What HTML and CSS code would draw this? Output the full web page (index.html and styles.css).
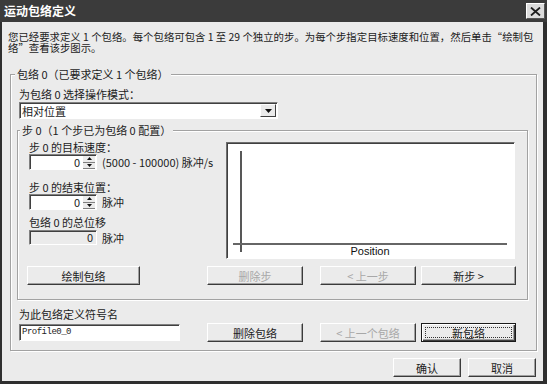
FILE: index.html
```html
<!DOCTYPE html>
<html lang="zh-CN">
<head>
    <meta charset="UTF-8">
    <meta name="viewport" content="width=device-width, initial-scale=1.0">
    <title>运动包络定义</title>
    <link rel="stylesheet" href="styles.css">
</head>
<body>
    <div class="window">
        <div class="titlebar">
            <span class="title">运动包络定义</span>
            <span class="close-btn">
                <svg width="11" height="9" viewBox="0 0 11 9"><path d="M1 0.5 L10 8.5 M10 0.5 L1 8.5" stroke="#1e1e1e" stroke-width="1.8"/></svg>
            </span>
        </div>

        <div class="client">
            <p class="intro">您已经要求定义 1 个包络。每个包络可包含 1 至 29 个独立的步。为每个步指定目标速度和位置，然后单击“绘制包<br>络”查看该步图示。</p>

            <fieldset class="group outer">
                <legend>包络 0（已要求定义 1 个包络）</legend>
                <div class="outer-body">
                    <div class="label mode-label">为包络 0 选择操作模式：</div>
                    <div class="select">
                        <span class="select-text">相对位置</span>
                        <span class="select-btn">
                            <svg width="7" height="4" viewBox="0 0 7 4"><polygon points="0,0 7,0 3.5,4" fill="#111"/></svg>
                        </span>
                    </div>

                    <fieldset class="group inner">
                        <legend>步 0（1 个步已为包络 0 配置）</legend>
                        <div class="inner-body">
                            <div class="step-main">
                                <div class="fields">
                                    <div class="label">步 0 的目标速度：</div>
                                    <div class="field-row">
                                        <div class="spin">
                                            <span class="spin-value">0</span>
                                            <span class="spin-btns">
                                                <span class="spin-half"><svg width="5" height="3" viewBox="0 0 5 3"><polygon points="2.5,0 5,3 0,3" fill="#111"/></svg></span>
                                                <span class="spin-half"><svg width="5" height="3" viewBox="0 0 5 3"><polygon points="0,0 5,0 2.5,3" fill="#111"/></svg></span>
                                            </span>
                                        </div>
                                        <span class="unit">(5000 - 100000) 脉冲/s</span>
                                    </div>

                                    <div class="label gap-label">步 0 的结束位置：</div>
                                    <div class="field-row">
                                        <div class="spin">
                                            <span class="spin-value">0</span>
                                            <span class="spin-btns">
                                                <span class="spin-half"><svg width="5" height="3" viewBox="0 0 5 3"><polygon points="2.5,0 5,3 0,3" fill="#111"/></svg></span>
                                                <span class="spin-half"><svg width="5" height="3" viewBox="0 0 5 3"><polygon points="0,0 5,0 2.5,3" fill="#111"/></svg></span>
                                            </span>
                                        </div>
                                        <span class="unit">脉冲</span>
                                    </div>

                                    <div class="label total-label">包络 0 的总位移</div>
                                    <div class="field-row total-row">
                                        <div class="readonly">0</div>
                                        <span class="unit">脉冲</span>
                                    </div>
                                </div>

                                <div class="chart">
                                    <svg width="287" height="115" viewBox="0 0 287 115">
                                        <line x1="14" y1="8" x2="14" y2="109" stroke="#111" stroke-width="1.4"/>
                                        <line x1="6" y1="101" x2="280" y2="101" stroke="#666" stroke-width="2"/>
                                        <text x="143" y="112" text-anchor="middle" class="axis-text">Position</text>
                                    </svg>
                                </div>
                            </div>

                            <div class="btn-row step-buttons">
                                <button class="btn wide">绘制包络</button>
                                <button class="btn col2" disabled>删除步</button>
                                <button class="btn col3" disabled>&lt; 上一步</button>
                                <button class="btn col4">新步 &gt;</button>
                            </div>
                        </div>
                    </fieldset>

                    <div class="label name-label">为此包络定义符号名</div>
                    <div class="btn-row name-row">
                        <div class="textbox">Profile0_0</div>
                        <button class="btn col2 after-input">删除包络</button>
                        <button class="btn col3" disabled>&lt; 上一个包络</button>
                        <button class="btn col4 default">新包络</button>
                    </div>
                </div>
            </fieldset>

            <div class="actions">
                <button class="btn dlg">确认</button>
                <button class="btn dlg">取消</button>
            </div>
        </div>
    </div>
</body>
</html>
```

FILE: styles.css
```css
* {
    box-sizing: border-box;
}

body {
    margin: 0;
    background-color: #ebebeb;
    font-family: "Noto Sans CJK SC", sans-serif;
    font-size: 11px;
    color: #1c1c1c;
}

.window {
    width: 547px;
    height: 384px;
    display: flex;
    flex-direction: column;
    background-color: #ebebeb;
    border-left: 2px solid #2f2f2f;
    border-right: 4px solid #2f2f2f;
    border-bottom: 3px solid #2f2f2f;
}

/* title bar */
.titlebar {
    height: 22px;
    margin: 0 -4px 0 -2px;
    padding: 0 2px 0 4px;
    display: flex;
    align-items: center;
    justify-content: space-between;
    background-color: #3b3b3b;
}

.title {
    color: #fff;
    font-size: 12px;
    font-weight: bold;
    line-height: 12px;
}

.close-btn {
    width: 19px;
    height: 16px;
    display: flex;
    align-items: center;
    justify-content: center;
    background-color: #dcdcdc;
    border: 1px solid;
    border-color: #fff #555 #555 #fff;
}

.client {
    flex: 1;
}

.intro {
    margin: 9px 0 0 6px;
    font-size: 10.4px;
    line-height: 11px;
    white-space: nowrap;
}

/* group boxes */
.group {
    margin: 0;
    padding: 0;
    min-width: 0;
    border: 1px solid #a2a2a2;
    box-shadow: 1px 1px 0 #fff, inset 1px 1px 0 #fff;
}

.group legend {
    padding: 0 2px;
    line-height: 12px;
    background-color: #ebebeb;
}

.outer {
    margin: 15px 6px 0 8px;
}

.outer legend {
    margin-left: 4px;
}

.outer-body {
    padding: 0 8px 8px 6px;
}

.inner {
    margin-top: 5px;
}

.inner legend {
    margin-left: 2px;
}

.inner-body {
    padding: 0 0 14px 11px;
}

.label {
    line-height: 12px;
}

.mode-label {
    margin: 8px 0 0 2px;
}

.select {
    width: 259px;
    height: 17px;
    margin: 2px 0 0 2px;
    display: flex;
    align-items: center;
    justify-content: space-between;
    background-color: #fff;
    border: 1px solid;
    border-color: #808080 #fff #fff #808080;
    box-shadow: inset 1px 1px 0 #404040;
}

.select-text {
    padding-left: 2px;
    line-height: 12px;
}

.select-btn {
    width: 16px;
    height: 13px;
    margin-right: 1px;
    display: flex;
    align-items: center;
    justify-content: center;
    background-color: #ebebeb;
    border: 1px solid;
    border-color: #fff #404040 #404040 #fff;
}

/* step area */
.step-main {
    display: flex;
    margin-top: 5px;
}

.fields {
    width: 197px;
}

.field-row {
    display: flex;
    align-items: center;
    margin-top: 1px;
}

.gap-label {
    margin-top: 11px;
}

.total-label {
    margin-top: 6px;
}

.total-row {
    margin-top: 2px;
}

.spin {
    width: 68px;
    height: 16px;
    display: flex;
    background-color: #fff;
    border: 1px solid;
    border-color: #808080 #fff #fff #808080;
    box-shadow: inset 1px 1px 0 #404040;
}

.spin-value {
    flex: 1;
    text-align: right;
    padding-right: 3px;
    line-height: 14px;
}

.spin-btns {
    width: 13px;
    display: flex;
    flex-direction: column;
    padding: 1px 1px 0 0;
}

.spin-half {
    flex: 1;
    display: flex;
    align-items: center;
    justify-content: center;
    background-color: #ebebeb;
    border-bottom: 1px solid #808080;
}

.readonly {
    width: 68px;
    height: 15px;
    text-align: right;
    padding-right: 3px;
    line-height: 12px;
    border: 1px solid;
    border-color: #808080 #fff #fff #808080;
    box-shadow: inset 1px 1px 0 #404040;
}

.unit {
    margin-left: 5px;
    line-height: 12px;
}

.chart {
    width: 289px;
    height: 117px;
    margin-top: 1px;
    background-color: #fff;
    border: 1px solid;
    border-color: #6e6e6e #fff #fff #6e6e6e;
    box-shadow: inset 1px 1px 0 #404040;
}

.chart svg {
    display: block;
}

.axis-text {
    font-family: "Liberation Sans", Arial, sans-serif;
    font-size: 11px;
    fill: #111;
}

/* buttons */
.btn-row {
    display: flex;
    align-items: center;
}

.step-buttons {
    margin: 7px 0 0 -2px;
}

.btn {
    height: 19px;
    width: 96px;
    padding: 0;
    font-family: inherit;
    font-size: 11px;
    line-height: 12px;
    color: #1c1c1c;
    background-color: #ebebeb;
    border: 1px solid;
    border-color: #fff #3a3a3a #3a3a3a #fff;
    box-shadow: inset -1px -1px 0 #a0a0a0;
}

.btn:disabled {
    color: #a8a8a8;
}

.wide {
    width: 113px;
}

.col2 {
    margin-left: 67px;
}

.col3 {
    margin-left: 17px;
}

.col4 {
    width: 95px;
    margin-left: 5px;
}

.default {
    border-color: #1a1a1a;
    box-shadow: inset 1px 1px 0 #fff, inset -1px -1px 0 #404040, inset -2px -2px 0 #a0a0a0;
    outline: 1px dotted #333;
    outline-offset: -5px;
}

.name-label {
    margin: 8px 0 0 2px;
}

.name-row {
    margin-top: 3px;
}

.textbox {
    width: 161px;
    height: 17px;
    margin-left: 2px;
    padding-left: 2px;
    font-family: "Liberation Mono", monospace;
    font-size: 9px;
    letter-spacing: -0.5px;
    line-height: 15px;
    background-color: #fff;
    border: 1px solid;
    border-color: #808080 #fff #fff #808080;
    box-shadow: inset 1px 1px 0 #404040;
}

.after-input {
    margin-left: 27px;
}

.actions {
    display: flex;
    justify-content: flex-end;
    gap: 7px;
    margin: 7px 7px 0 0;
}

.dlg {
    width: 68px;
}
```
